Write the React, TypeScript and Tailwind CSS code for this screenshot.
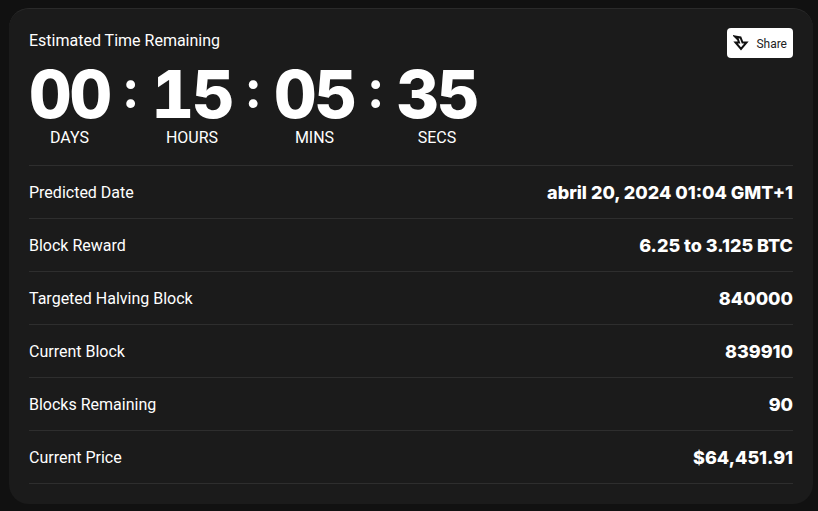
const units = [
  { value: "00", label: "DAYS" },
  { value: "15", label: "HOURS" },
  { value: "05", label: "MINS" },
  { value: "35", label: "SECS" },
];

const rows = [
  { label: "Predicted Date", value: "abril 20, 2024 01:04 GMT+1" },
  { label: "Block Reward", value: "6.25 to 3.125 BTC" },
  { label: "Targeted Halving Block", value: "840000" },
  { label: "Current Block", value: "839910" },
  { label: "Blocks Remaining", value: "90" },
  { label: "Current Price", value: "$64,451.91" },
];

function ShareIcon() {
  return (
    <svg width="16" height="16" viewBox="0 0 16 16" fill="none" stroke="#111" strokeWidth="2" strokeLinejoin="miter">
      <path d="M2 1.5 L7.5 2.5 L9.5 7.5 H13.5 L8 14 L2.5 7.5 H6 L5 4.5 Z" />
    </svg>
  );
}

export default function App() {
  return (
    <div className="min-h-screen bg-[#111111] pt-2 pl-[9px] pr-[5px] font-['Roboto',sans-serif] text-white">
      <div className="h-[496px] rounded-[20px] border-t border-[#2a2a2a] bg-[#1b1b1b] px-5 pt-[19px]">
        <div className="flex items-start justify-between">
          <div className="pt-[3px] text-[16px] leading-[20px]">Estimated Time Remaining</div>
          <button className="flex h-[30px] items-center gap-[7px] rounded bg-white px-[6px] text-[12px] leading-[32px] text-[#222]">
            <ShareIcon />
            <span className="pt-[1px]">Share</span>
          </button>
        </div>
        <div className="-mt-[4px] flex h-[112px] items-start border-b border-[#2e2e2e]">
          {units.map((u, i) => (
            <div key={u.label} className="flex items-start">
              {i > 0 && (
                <div className="w-[41.5px] pt-[6px] text-center font-['Inter',sans-serif] text-[52px] leading-[60px] font-bold">:</div>
              )}
              <div className="flex w-[81px] flex-col items-center">
                <div className="pt-[6px] font-['Inter',sans-serif] text-[66px] leading-[68px] font-extrabold tracking-[-2px] tabular-nums">{u.value}</div>
                <div className="text-[16px] leading-[20px]">{u.label}</div>
              </div>
            </div>
          ))}
        </div>
        {rows.map((r) => (
          <div key={r.label} className="flex h-[53px] items-center justify-between border-b border-[#2e2e2e]">
            <span className="pt-[1px] text-[16px]">{r.label}</span>
            <span className="pt-[1px] font-['Inter',sans-serif] text-[18px] font-extrabold">{r.value}</span>
          </div>
        ))}
      </div>
    </div>
  );
}
